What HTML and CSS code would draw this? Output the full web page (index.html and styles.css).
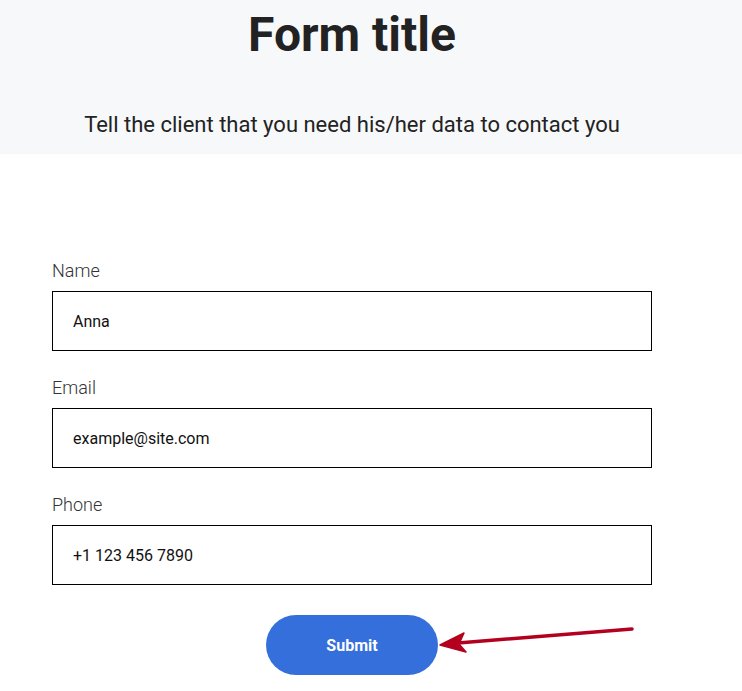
FILE: index.html
```html
<!DOCTYPE html>
<html lang="en">
<head>
  <meta charset="UTF-8" />
  <title>Form</title>
  <meta name="viewport" content="width=device-width, initial-scale=1.0" />
  <link rel="stylesheet" href="styles.css">
</head>
<body>
  <header class="hero">
    <h1>Form title</h1>
    <p>Tell the client that you need his/her data to contact you</p>
  </header>

  <form class="form">
    <label for="name">Name</label>
    <input type="text" id="name" value="Anna" />

    <label for="email">Email</label>
    <input type="text" id="email" value="example@site.com" />

    <label for="phone">Phone</label>
    <input type="text" id="phone" value="+1 123 456 7890" />

    <div class="actions">
      <button type="button">Submit</button>
      <svg class="arrow" width="200" height="30" viewBox="0 0 200 30">
        <path d="M194 4 L20 18" stroke="#b3001f" stroke-width="3.5" stroke-linecap="round" fill="none" />
        <path d="M2 20 L26 8 L21 19 L28 27 Z" fill="#b3001f" stroke="#b3001f" stroke-width="1.5" stroke-linejoin="round" />
      </svg>
    </div>
  </form>
</body>
</html>
```

FILE: styles.css
```css
body {
  font-family: Roboto, 'Liberation Sans', sans-serif;
  background-color: #ffffff;
  color: #222222;
  margin: 0;
  padding: 0;
}
.hero {
  background-color: #f7f8fa;
  height: 154px;
  padding: 1px 38px 0 0;
  box-sizing: border-box;
  text-align: center;
}
.hero h1 {
  font-size: 48px;
  font-weight: 700;
  color: #222222;
  margin: 6px 0 0;
  line-height: 56px;
}
.hero p {
  font-size: 22px;
  margin: 47px 0 0;
  line-height: 30px;
}
.form {
  width: 600px;
  margin: 105px 0 0 52px;
  display: flex;
  flex-direction: column;
}
label {
  font-size: 18px;
  font-weight: 300;
  color: #333333;
  line-height: 24px;
  margin-bottom: 8px;
}
input {
  height: 60px;
  border: 1px solid #000000;
  padding: 0 20px;
  font-family: Roboto, 'Liberation Sans', sans-serif;
  font-size: 16px;
  color: #111111;
  box-sizing: border-box;
  margin-bottom: 25px;
  outline: none;
}
.actions {
  position: relative;
  display: flex;
  justify-content: center;
  margin-top: 5px;
}
button {
  width: 172px;
  height: 60px;
  border: none;
  border-radius: 30px;
  background-color: #346fdb;
  color: white;
  font-family: Roboto, 'Liberation Sans', sans-serif;
  font-size: 16px;
  font-weight: bold;
  cursor: pointer;
}
.arrow {
  position: absolute;
  left: 386px;
  top: 10px;
}
```
